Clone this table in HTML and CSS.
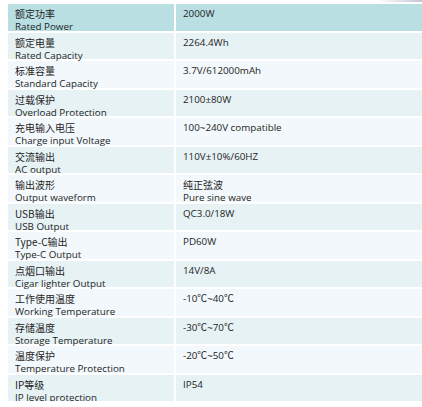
FILE: index.html
```html
<!DOCTYPE html>
<html lang="zh">
<head>
<meta charset="utf-8">
<title>Specs</title>
<link rel="stylesheet" href="styles.css">
</head>
<body>
<div class="spec">
  <div class="cell k head"><span class="zh">额定功率</span><span class="en">Rated Power</span></div>
  <div class="cell v head"><span class="en">2000W</span></div>

  <div class="cell k a"><span class="zh">额定电量</span><span class="en">Rated Capacity</span></div>
  <div class="cell v a"><span class="en">2264.4Wh</span></div>

  <div class="cell k b"><span class="zh">标准容量</span><span class="en">Standard Capacity</span></div>
  <div class="cell v b"><span class="en">3.7V/612000mAh</span></div>

  <div class="cell k a"><span class="zh">过载保护</span><span class="en">Overload Protection</span></div>
  <div class="cell v a"><span class="en">2100±80W</span></div>

  <div class="cell k b"><span class="zh">充电输入电压</span><span class="en">Charge input Voltage</span></div>
  <div class="cell v b"><span class="en">100~240V compatible</span></div>

  <div class="cell k a"><span class="zh">交流输出</span><span class="en">AC output</span></div>
  <div class="cell v a"><span class="en">110V±10%/60HZ</span></div>

  <div class="cell k b"><span class="zh">输出波形</span><span class="en">Output waveform</span></div>
  <div class="cell v b"><span class="zh">纯正弦波</span><span class="en">Pure sine wave</span></div>

  <div class="cell k a"><span class="zh">USB输出</span><span class="en">USB Output</span></div>
  <div class="cell v a"><span class="en">QC3.0/18W</span></div>

  <div class="cell k b"><span class="zh">Type-C输出</span><span class="en">Type-C Output</span></div>
  <div class="cell v b"><span class="en">PD60W</span></div>

  <div class="cell k a"><span class="zh">点烟口输出</span><span class="en">Cigar lighter Output</span></div>
  <div class="cell v a"><span class="en">14V/8A</span></div>

  <div class="cell k b"><span class="zh">工作使用温度</span><span class="en">Working Temperature</span></div>
  <div class="cell v b"><span class="en">-10℃~40℃</span></div>

  <div class="cell k a"><span class="zh">存储温度</span><span class="en">Storage Temperature</span></div>
  <div class="cell v a"><span class="en">-30℃~70℃</span></div>

  <div class="cell k b"><span class="zh">温度保护</span><span class="en">Temperature Protection</span></div>
  <div class="cell v b"><span class="en">-20℃~50℃</span></div>

  <div class="cell k a"><span class="zh">IP等级</span><span class="en">IP level protection</span></div>
  <div class="cell v a"><span class="en">IP54</span></div>
</div>
</body>
</html>
```

FILE: styles.css
```css
html, body {
  margin: 0;
  padding: 0;
  background: #ffffff;
}
body {
  position: relative;
  padding: 4px 0 0 8px;
  font-family: "Open Sans", "Noto Sans CJK SC", sans-serif;
  color: #1e1e1e;
  overflow: hidden;
}
body::before {
  content: "";
  position: absolute;
  top: 0;
  right: 0;
  width: 44px;
  height: 2px;
  background: linear-gradient(to right, rgba(200, 200, 216, 0), #c4c4d6);
}
.spec {
  display: grid;
  grid-template-columns: 166px 250px;
  grid-auto-rows: 26.5px;
  gap: 2px;
  background: #ffffff;
}
.cell {
  display: flex;
  flex-direction: column;
  padding: 4px 0 0 7px;
  box-sizing: border-box;
}
.zh {
  display: block;
  font-family: "Noto Sans CJK SC", sans-serif;
  font-size: 10px;
  line-height: 12px;
  height: 12px;
}
.en {
  display: block;
  font-size: 9.8px;
  line-height: 12px;
  height: 12px;
}
.zh + .en {
  margin-top: 1px;
}
.head { background: #b9dfe3; }
.a { background: #e7f2f5; }
.b { background: #f2f8fb; }
```
